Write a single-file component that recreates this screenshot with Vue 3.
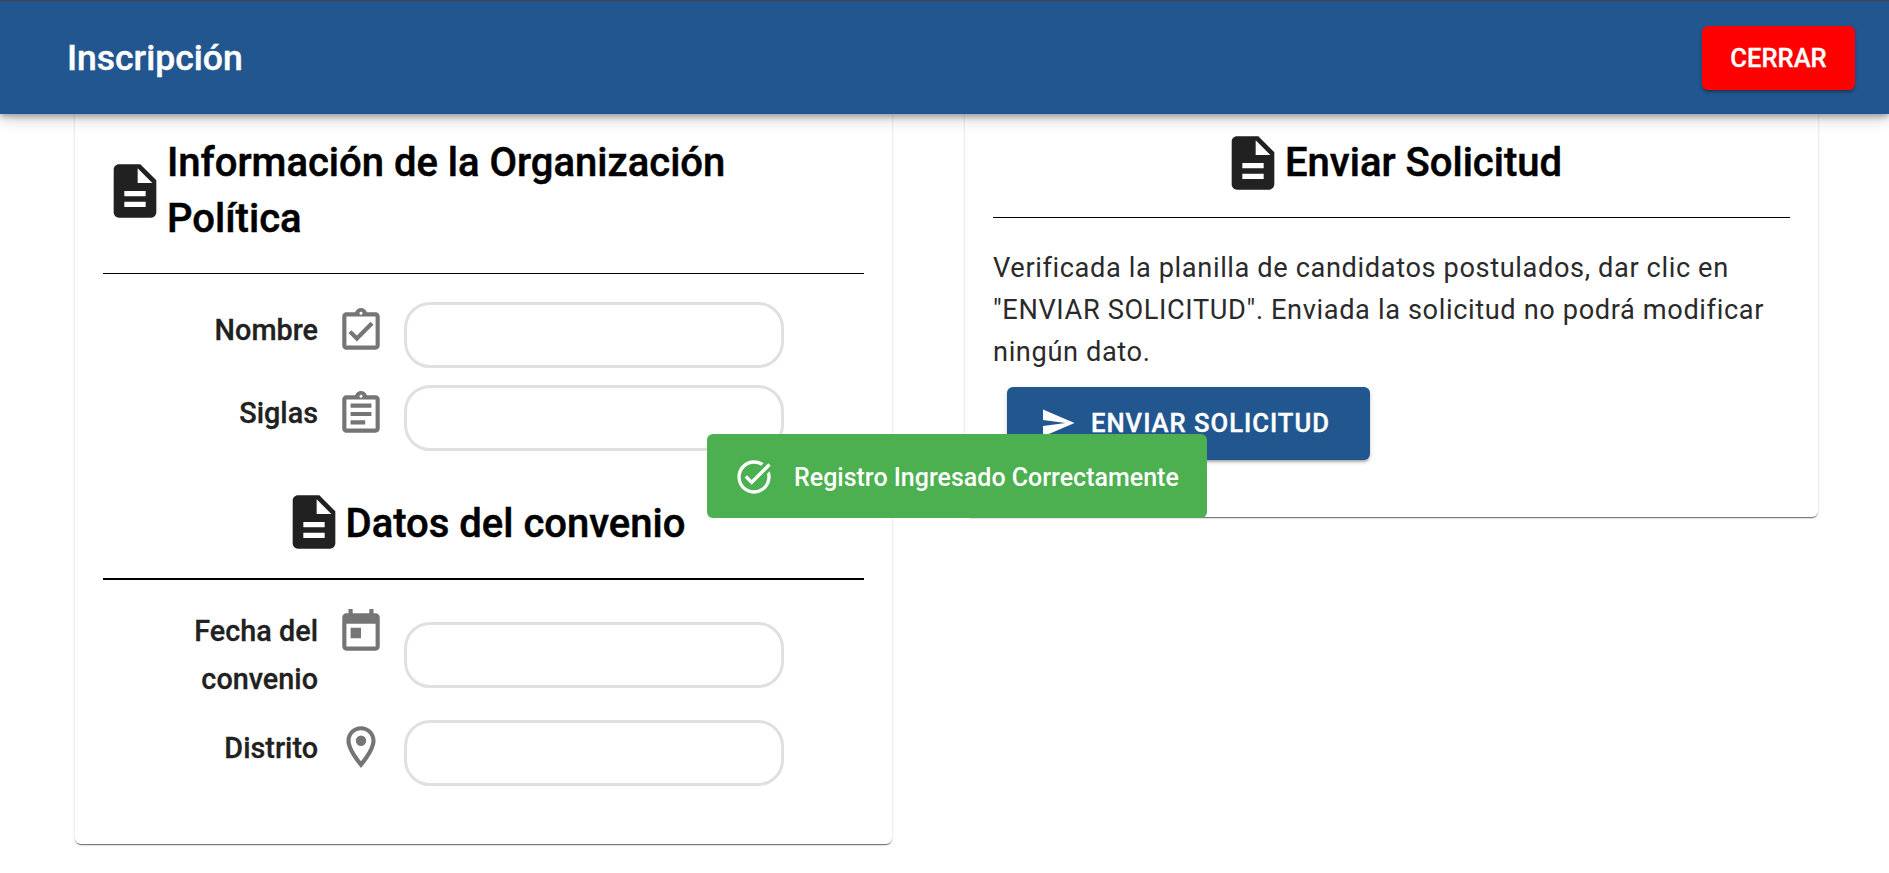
<script setup>
import { ref } from 'vue'

const nombre = ref('')
const siglas = ref('')
const fecha = ref('')
const distrito = ref('')

const docIcon = 'M14 2H6c-1.1 0-1.99.9-1.99 2L4 20c0 1.1.89 2 1.99 2H18c1.1 0 2-.9 2-2V8l-6-6zm2 16H8v-2h8v2zm0-4H8v-2h8v2zm-3-5V3.5L18.5 9H13z'
const clipCheck = 'M18 9l-1.41-1.42L10 14.17l-2.59-2.58L6 13l4 4zm1-6h-4.18C14.4 1.84 13.3 1 12 1c-1.3 0-2.4.84-2.82 2H5c-.14 0-.27.01-.4.04-.39.08-.74.28-1.01.55-.18.18-.33.4-.43.64-.1.23-.16.49-.16.77v14c0 .27.06.54.16.78s.25.45.43.64c.27.27.62.47 1.01.55.13.02.26.03.4.03h14c1.1 0 2-.9 2-2V5c0-1.1-.9-2-2-2zm-7-.25c.41 0 .75.34.75.75s-.34.75-.75.75-.75-.34-.75-.75.34-.75.75-.75zM19 19H5V5h14v14z'
const clipText = 'M7 7h10v2H7zm0 4h10v2H7zm0 4h7v2H7zm12-12h-4.18C14.4 1.84 13.3 1 12 1c-1.3 0-2.4.84-2.82 2H5c-.14 0-.27.01-.4.04-.39.08-.74.28-1.01.55-.18.18-.33.4-.43.64-.1.23-.16.49-.16.77v14c0 .27.06.54.16.78s.25.45.43.64c.27.27.62.47 1.01.55.13.02.26.03.4.03h14c1.1 0 2-.9 2-2V5c0-1.1-.9-2-2-2zm-7-.25c.41 0 .75.34.75.75s-.34.75-.75.75-.75-.34-.75-.75.34-.75.75-.75zM19 19H5V5h14v14z'
const calendar = 'M19 3h-1V1h-2v2H8V1H6v2H5c-1.11 0-1.99.9-1.99 2L3 19c0 1.1.89 2 2 2h14c1.1 0 2-.9 2-2V5c0-1.1-.9-2-2-2zm0 16H5V8h14v11zM7 10h5v5H7z'
const pin = 'M12 2C8.13 2 5 5.13 5 9c0 5.25 7 13 7 13s7-7.75 7-13c0-3.87-3.13-7-7-7zM7 9c0-2.76 2.24-5 5-5s5 2.24 5 5c0 2.88-2.88 7.19-5 9.88C9.92 16.21 7 11.85 7 9zm5-2.5a2.5 2.5 0 1 0 0 5 2.5 2.5 0 0 0 0-5z'
const send = 'M2.01 21L23 12 2.01 3 2 10l15 2-15 2z'
const taskAlt = 'M22 5.18L10.59 16.6l-4.24-4.25 1.41-1.41 2.83 2.83 10-10L22 5.18zm-2.21 5.04c.13.57.21 1.17.21 1.78 0 4.42-3.58 8-8 8s-8-3.58-8-8 3.58-8 8-8c1.58 0 3.04.46 4.28 1.25l1.44-1.44C16.1 2.67 14.13 2 12 2 6.48 2 2 6.48 2 12s4.48 10 10 10 10-4.48 10-10c0-1.19-.22-2.33-.6-3.39l-1.61 1.61z'
</script>

<template>
	<div class="page">
		<header class="topbar">
			<div class="topbar-title">Inscripción</div>
			<button class="btn-close">CERRAR</button>
		</header>

		<div class="content">
			<section class="card card-left">
				<div class="section-title title-first">
					<svg class="doc-icon" viewBox="0 0 24 24"><path :d="docIcon" /></svg>
					<h2>Información de la Organización Política</h2>
				</div>
				<hr class="divider" />

				<div class="form-row">
					<label class="field-label">Nombre</label>
					<svg class="field-icon" viewBox="0 0 24 24"><path :d="clipCheck" /></svg>
					<input class="field-input" type="text" v-model="nombre">
				</div>
				<div class="form-row">
					<label class="field-label">Siglas</label>
					<svg class="field-icon" viewBox="0 0 24 24"><path :d="clipText" /></svg>
					<input class="field-input" type="text" v-model="siglas">
				</div>

				<div class="section-title title-center title-second">
					<svg class="doc-icon" viewBox="0 0 24 24"><path :d="docIcon" /></svg>
					<h2>Datos del convenio</h2>
				</div>
				<hr class="divider divider-thick" />

				<div class="form-row form-row-tall">
					<label class="field-label">Fecha del convenio</label>
					<svg class="field-icon" viewBox="0 0 24 24"><path :d="calendar" /></svg>
					<input class="field-input" type="text" v-model="fecha">
				</div>
				<div class="form-row">
					<label class="field-label">Distrito</label>
					<svg class="field-icon icon-pin" viewBox="0 0 24 24"><path :d="pin" /></svg>
					<input class="field-input" type="text" v-model="distrito">
				</div>
			</section>

			<section class="card card-right">
				<div class="section-title title-center">
					<svg class="doc-icon" viewBox="0 0 24 24"><path :d="docIcon" /></svg>
					<h2>Enviar Solicitud</h2>
				</div>
				<hr class="divider" />
				<p class="notice">Verificada la planilla de candidatos postulados, dar clic en "ENVIAR SOLICITUD". Enviada la solicitud no podrá modificar ningún dato.</p>
				<button class="btn-send">
					<svg class="send-icon" viewBox="0 0 24 24"><path :d="send" /></svg>
					ENVIAR SOLICITUD
				</button>
			</section>
		</div>

		<div class="toast">
			<svg class="toast-icon" viewBox="0 0 24 24"><path :d="taskAlt" /></svg>
			<span>Registro Ingresado Correctamente</span>
		</div>
	</div>
</template>

<style>
html, body {
	margin: 0;
	overflow: hidden;
	background: #fff;
}
</style>

<style scoped>
.page {
	font-family: Roboto, "Liberation Sans", sans-serif;
	height: 873px;
	overflow: hidden;
}
.topbar {
	position: relative;
	z-index: 2;
	box-sizing: border-box;
	height: 114px;
	display: flex;
	align-items: center;
	justify-content: space-between;
	padding: 0 34px 0 67px;
	background: #21568f;
	border-top: 1px solid #444;
	box-shadow: 0 3px 6px rgba(0, 0, 0, .3), 0 6px 16px rgba(0, 0, 0, .14);
}
.topbar-title {
	font-size: 35.5px;
	font-weight: 500;
	-webkit-text-stroke: .4px #fff;
	color: #fff;
}
.btn-close {
	box-sizing: border-box;
	width: 153px;
	height: 64px;
	border: 0;
	border-radius: 6px;
	background: #f00;
	color: #fff;
	font-family: inherit;
	font-size: 25.6px;
	font-weight: 500;
	-webkit-text-stroke: .3px #fff;
	box-shadow: 0 3px 3px -2px rgba(0, 0, 0, .3), 0 2px 4px rgba(0, 0, 0, .2);
}
.content {
	display: flex;
	align-items: flex-start;
	gap: 73px;
	margin-top: -14px;
	padding-left: 75px;
}
.card {
	box-sizing: border-box;
	background: #fff;
	border-radius: 6px;
	padding: 0 28px;
	box-shadow: 0 2px 1px -1px rgba(0, 0, 0, .4), 0 1px 1px 0 rgba(0, 0, 0, .2), 0 1px 3px 0 rgba(0, 0, 0, .14);
}
.card-left {
	width: 817px;
	height: 744px;
	padding-top: 31px;
}
.card-right {
	width: 853px;
	height: 417px;
	padding-top: 31px;
}
.section-title {
	display: flex;
	align-items: center;
}
.section-title h2 {
	margin: 0;
	font-size: 40px;
	font-weight: 500;
	-webkit-text-stroke: .5px #000;
	line-height: 56px;
	color: #000;
}
.card-left h2 {
	padding-top: 4px;
}
.title-center {
	justify-content: center;
}
.title-second {
	margin-top: 39px;
}
.doc-icon {
	flex: none;
	width: 64px;
	height: 64px;
	fill: #212121;
}
.title-first .doc-icon {
	margin-top: 4px;
}
.divider {
	margin: 22px 0 0;
	border: 0;
	border-top: 1px solid #000;
}
.title-first + .divider {
	margin-top: 26px;
}
.divider-thick {
	margin-top: 24px;
	border-top: 2px solid #000;
}
.form-row {
	display: flex;
	align-items: flex-start;
	margin-top: 17px;
}
.divider + .form-row {
	margin-top: 28px;
}
.form-row-tall {
	margin-top: 27px !important;
}
.field-label {
	box-sizing: border-box;
	width: 215px;
	padding-top: 4px;
	text-align: right;
	font-size: 28.8px;
	font-weight: 500;
	-webkit-text-stroke: .3px #212121;
	line-height: 48px;
	color: #212121;
}
.field-icon {
	flex: none;
	width: 50px;
	height: 50px;
	margin: 4px 18px 0;
	fill: #757575;
}
.field-icon.icon-pin {
	margin-top: 2px;
}
.field-input {
	box-sizing: border-box;
	width: 380px;
	height: 66px;
	border: 3px solid #e0e0e0;
	border-radius: 26px;
	background: #fff;
	outline: none;
}
.form-row-tall .field-label {
	padding-top: 0;
}
.form-row-tall .field-icon {
	margin-top: 0;
}
.form-row-tall .field-input {
	margin-top: 15px;
}
.notice {
	margin: 29px 0 0;
	font-size: 27.2px;
	letter-spacing: .62px;
	line-height: 42px;
	color: #2a2a2a;
}
.btn-send {
	box-sizing: border-box;
	display: flex;
	align-items: center;
	width: 363px;
	height: 73px;
	margin: 14px 0 0 14px;
	padding: 0 0 2px 33px;
	border: 0;
	border-radius: 6px;
	background: #21568f;
	color: #fff;
	font-family: inherit;
	font-size: 25.6px;
	letter-spacing: 1px;
	font-weight: 500;
	-webkit-text-stroke: .4px #fff;
	box-shadow: 0 3px 3px -2px rgba(0, 0, 0, .3), 0 2px 4px rgba(0, 0, 0, .2);
}
.send-icon {
	flex: none;
	width: 36px;
	height: 36px;
	margin-right: 15px;
	fill: #fff;
}
.toast {
	position: fixed;
	left: 707px;
	top: 434px;
	z-index: 3;
	box-sizing: border-box;
	width: 500px;
	height: 84px;
	display: flex;
	align-items: center;
	padding: 2px 0 0 27px;
	border-radius: 6px;
	background: #4caf50;
	color: #fff;
	font-size: 25px;
	font-weight: 500;
}
.toast-icon {
	flex: none;
	width: 40px;
	height: 40px;
	margin-right: 20px;
	fill: #fff;
}
</style>
